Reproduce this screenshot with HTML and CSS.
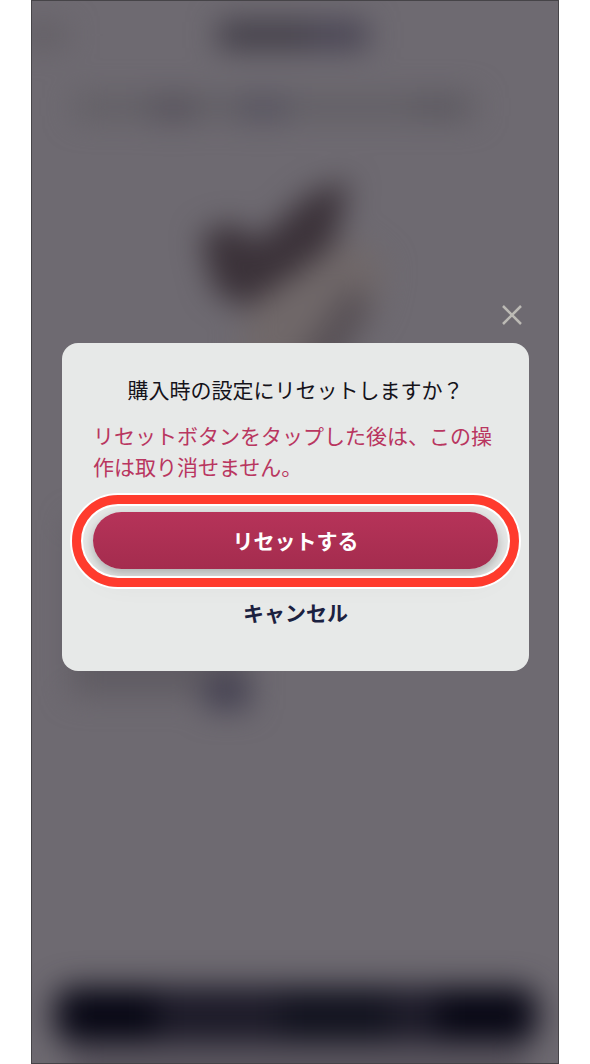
FILE: index.html
```html
<!DOCTYPE html>
<html lang="ja">
<head>
<meta charset="UTF-8" />
<meta name="viewport" content="width=device-width, initial-scale=1" />
<title>リセット</title>
<link rel="stylesheet" href="styles.css">
</head>
<body>
  <main class="phone">
    <!-- blurred app screen behind the dialog -->
    <svg class="backdrop" viewBox="31 0 528 1064" preserveAspectRatio="none" aria-hidden="true">
      <defs>
        <filter id="blur" x="-200" y="-200" width="1000" height="1500" filterUnits="userSpaceOnUse" color-interpolation-filters="sRGB">
          <feGaussianBlur stdDeviation="15" />
        </filter>
      </defs>
      <g filter="url(#blur)">
        <rect x="20" y="24" width="46" height="20" fill="#615d63" />
        <rect x="218" y="20" width="92" height="28" fill="#413d47" />
        <rect x="310" y="20" width="58" height="28" fill="#474352" />
        <rect x="74" y="94" width="402" height="24" fill="#625f65" />
        <rect x="150" y="94" width="46" height="26" fill="#57535c" />
        <rect x="238" y="94" width="50" height="26" fill="#57545f" />
        <rect x="412" y="94" width="54" height="24" fill="#5b585f" />
        <path d="M200 234 L232 222 L258 240 L310 192 L350 180 L334 244 L296 274 L246 308 L214 290 Z" fill="#3b3239" />
        <path d="M246 306 L312 262 L350 236 L386 264 L376 310 L330 370 L240 370 Z" fill="#706869" />
        <path d="M350 284 L374 304 L336 370 L290 370 Z" fill="#575055" />
        <rect x="70" y="520" width="180" height="176" fill="#605c63" />
        <rect x="204" y="674" width="46" height="36" fill="#454252" />
        <rect x="52" y="987" width="488" height="58" rx="20" fill="#1d1b29" />
        <rect x="66" y="993" width="90" height="46" fill="#070714" />
        <rect x="438" y="993" width="90" height="46" fill="#070714" />
        <rect x="280" y="994" width="110" height="46" fill="#12131f" />
        <rect x="70" y="1050" width="456" height="60" fill="#5a555e" />
      </g>
    </svg>

    <div class="modal" role="dialog" aria-modal="true" aria-labelledby="modalTitle">
      <button class="close-btn" type="button" aria-label="閉じる">
        <svg class="close-icon" viewBox="0 0 20 20">
          <path d="M1 1L19 19M19 1L1 19" />
        </svg>
      </button>
      <section class="card">
        <h1 class="card-title" id="modalTitle">購入時の設定にリセットしますか？</h1>
        <p class="card-warning">リセットボタンをタップした後は、この操作は取り消せません。</p>
        <div class="highlight">
          <button class="reset-btn" type="button">リセットする</button>
        </div>
        <button class="cancel-btn" type="button">キャンセル</button>
      </section>
    </div>
  </main>
</body>
</html>
```

FILE: styles.css
```css
:root {
  --screen: #6e6a71;
  --card: #e7e9e8;
  --crimson: #b93660;
  --navy: #1b2140;
  --ring: #ff3b2d;
  --text-size: 21px;
  --line: 31px;
}

* {
  box-sizing: border-box;
}

body {
  margin: 0;
  padding: 0 31px;
  background: #fff;
  font-family: "Noto Sans CJK JP", sans-serif;
  font-size: var(--text-size);
  line-height: var(--line);
}

button {
  border: none;
  padding: 0;
  background: none;
  font: inherit;
  cursor: pointer;
}

.phone {
  position: relative;
  display: flex;
  align-items: center;
  min-height: 100vh;
  padding: 0 29px 95px 30px;
  border: 1px solid #464448;
  background: var(--screen);
  overflow: hidden;
}

.backdrop {
  position: absolute;
  inset: 0;
  width: 100%;
  height: 100%;
}

.modal {
  position: relative;
  display: flex;
  flex-direction: column;
  align-items: flex-end;
  gap: 11px;
  width: 100%;
}

.close-btn {
  display: flex;
  align-items: center;
  justify-content: center;
  width: 34px;
  height: 34px;
}
.close-icon {
  width: 20px;
  height: 20px;
  fill: none;
  stroke: #bcbab5;
  stroke-width: 2.5;
}

.card {
  display: flex;
  flex-direction: column;
  width: 100%;
  padding: 31px 31px 43px;
  border-radius: 16px;
  background: var(--card);
}
.card-title {
  margin: 0 0 15px;
  color: #15131a;
  font-size: var(--text-size);
  font-weight: 400;
  text-align: center;
}
.card-warning {
  margin: 0 0 30px;
  color: var(--crimson);
}

/* red ring around the button to tap */
.highlight {
  position: relative;
  display: flex;
  margin-bottom: 28px;
}
.highlight::after {
  content: "";
  position: absolute;
  inset: -17px -21px -18px;
  border: 9px solid var(--ring);
  border-radius: 46px;
  box-shadow: 0 0 0 2px #fff, inset 0 0 0 2px #fff;
  pointer-events: none;
}

.reset-btn {
  flex: 1;
  height: 57px;
  border-radius: 29px;
  background: linear-gradient(#b63359, #a42c4e);
  box-shadow: 0 4px 10px rgba(0,0,0,0.2), 0 8px 32px rgba(0,0,0,0.08);
  color: #fff;
  font-weight: 700;
}
.cancel-btn {
  align-self: center;
  color: var(--navy);
  font-weight: 700;
}
```
